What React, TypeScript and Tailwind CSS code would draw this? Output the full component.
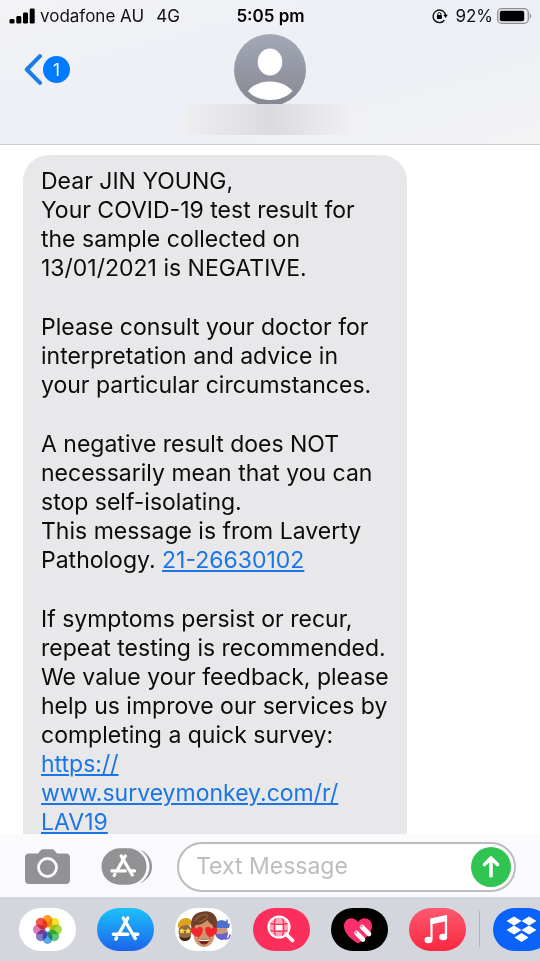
import type { ReactNode } from "react";

const paragraphs = [
	[
		"Dear JIN YOUNG,",
		"Your COVID-19 test result for",
		"the sample collected on",
		"13/01/2021 is NEGATIVE.",
	],
	[
		"Please consult your doctor for",
		"interpretation and advice in",
		"your particular circumstances.",
	],
];

function Lines({ lines }: { lines: string[] }) {
	return (
		<>
			{lines.map((line) => (
				<span key={line} className="block whitespace-nowrap">
					{line}
				</span>
			))}
		</>
	);
}

function StatusBar() {
	return (
		<div className="grid grid-cols-[1fr_auto_1fr] items-center h-[31px] pl-[9px] pr-2 text-[17px] leading-5 text-[#111]">
			<div className="flex items-center whitespace-nowrap">
				<svg width="26" height="16" viewBox="0 0 26 16" aria-hidden="true">
					<rect x="0.5" y="11" width="5" height="4.6" rx="1.4" />
					<rect x="7.3" y="8" width="5" height="7.6" rx="1.4" />
					<rect x="14" y="4.5" width="5" height="11.1" rx="1.4" />
					<rect x="20.7" y="0.5" width="5" height="15.1" rx="1.4" />
				</svg>
				<span className="ml-[5px]">vodafone AU</span>
				<span className="ml-3">4G</span>
			</div>
			<time className="font-semibold text-black">5:05 pm</time>
			<div className="flex items-center justify-end">
				<svg width="16" height="16" viewBox="0 0 16 16" aria-hidden="true">
					<path
						d="M12.400 12.200A6.300 6.300 0 1 1 13.600 7"
						fill="none"
						stroke="#111"
						strokeWidth="1.400"
					/>
					<path d="M11.400 6.800h4.400l-2.200 3.200z" />
					<rect x="4.900" y="7" width="5" height="4" rx="0.700" />
					<path d="M5.900 7.200V6a1.500 1.500 0 0 1 3 0v1.200" fill="none" stroke="#111" strokeWidth="1" />
				</svg>
				<span className="ml-[7px]">92%</span>
				<svg className="ml-1" width="35" height="16" viewBox="0 0 35 16" aria-hidden="true">
					<rect x="0.7" y="0.7" width="30.6" height="14.6" rx="4" fill="none" stroke="#8e8e90" strokeWidth="1.3" />
					<rect x="2.8" y="2.8" width="24.4" height="10.4" rx="2" />
					<path d="M32.8 5.4v5.2c1.9-.8 1.9-4.4 0-5.2z" fill="#8e8e90" />
				</svg>
			</div>
		</div>
	);
}

function Header() {
	return (
		<header className="shrink-0 border-b border-[#cfcfd3] bg-linear-to-br from-[#f3f3f5] via-[#eceff6] to-[#f3f3f4]">
			<StatusBar />
			<div className="grid grid-cols-[1fr_auto_1fr] pt-[3px] pb-[9px]">
				<button type="button" aria-label="Back, 1 unread" className="flex items-center self-start justify-self-start pl-6 pt-5 gap-px">
					<svg width="18" height="31" viewBox="0 0 18 31" aria-hidden="true">
						<path d="M16 2.2 2.8 15.5 16 28.8" fill="none" stroke="#1a7bea" strokeWidth="4" strokeLinecap="round" strokeLinejoin="round" />
					</svg>
					<span className="flex items-center justify-center size-[27px] rounded-full bg-[#007aff] text-white text-[17px] leading-5">
						1
					</span>
				</button>
				<div className="flex flex-col items-center">
					<div className="h-[70px] overflow-hidden">
						<svg width="72" height="72" viewBox="0 0 72 72" role="img" aria-label="Contact">
							<defs>
								<linearGradient id="avatar" x1="0" y1="0" x2="0" y2="1">
									<stop offset="0" stopColor="#a4a8b6" />
									<stop offset="1" stopColor="#858892" />
								</linearGradient>
							</defs>
							<circle cx="36" cy="36" r="36" fill="url(#avatar)" />
							<ellipse cx="36" cy="28" rx="12.300" ry="13.500" fill="#fff" />
							<path d="M14 57C19 51 26 47.500 36 47.500S53 51 58.500 57C53 63 45 66 36 66S19 63 14 57z" fill="#fff" />
						</svg>
					</div>
					<div className="w-[170px] h-[31px] bg-linear-to-r from-[#efeff2] via-[#dadbdf] to-[#f1f1f3]" />
				</div>
			</div>
		</header>
	);
}

function Message() {
	return (
		<main className="flex-1 min-h-0 overflow-hidden pt-[10px] pl-[23px] pr-4">
			<article className="flex flex-col gap-[30px] w-96 max-w-full rounded-[26px] bg-[#e8e8ea] pt-3 pb-10 pl-[18px] text-[23px] leading-[29px] text-[#0c0c0d]">
				{paragraphs.map((lines) => (
					<p key={lines[0]}>
						<Lines lines={lines} />
					</p>
				))}
				<p>
					<Lines
						lines={[
							"A negative result does NOT",
							"necessarily mean that you can",
							"stop self-isolating.",
							"This message is from Laverty",
						]}
					/>
					Pathology.{" "}
					<a href="tel:2126630102" className="text-[#1a76e6] underline decoration-2 underline-offset-2">
						21-26630102
					</a>
				</p>
				<p>
					<Lines
						lines={[
							"If symptoms persist or recur,",
							"repeat testing is recommended.",
							"We value your feedback, please",
							"help us improve our services by",
							"completing a quick survey:",
						]}
					/>
					<a href="https://www.surveymonkey.com/r/LAV19" className="text-[#1a76e6] underline decoration-2 underline-offset-2">
						https://
						<br />
						www.surveymonkey.com/r/
						<br />
						LAV19
					</a>
				</p>
			</article>
		</main>
	);
}

function AppStoreMark() {
	return (
		<g fill="none" stroke="#fff" strokeLinecap="round" strokeWidth="3.400">
			<path d="M16.500 2 7.500 18" />
			<path d="M12 2 24 22.500" />
			<path d="M2 18.200h14.500M22 18.200h4.500" />
			<path d="M5.300 21.800l-.8 1.300" />
		</g>
	);
}

function Composer() {
	return (
		<form className="flex items-center h-[63px] pt-[2px] pl-[25px] pr-6 bg-[#fafafc]" onSubmit={(e) => e.preventDefault()}>
			<button type="button" aria-label="Camera" className="shrink-0">
				<svg width="45" height="35" viewBox="0 0 45 35" aria-hidden="true">
					<path
						d="M4 4.500h9l2.500-3c.8-1 1.500-1.300 2.700-1.300h8.600c1.200 0 1.900.3 2.700 1.300l2.500 3h9c2.500 0 4 1.500 4 4V31c0 2.500-1.500 4-4 4H4c-2.500 0-4-1.500-4-4V8.500c0-2.500 1.500-4 4-4z"
						fill="#929294"
					/>
					<circle cx="22.500" cy="18.500" r="9" fill="none" stroke="#fafafc" strokeWidth="2.800" />
				</svg>
			</button>
			<button type="button" aria-label="Apps" className="shrink-0 ml-[31px]">
				<svg width="51" height="37" viewBox="0 0 51 37" aria-hidden="true">
					<rect x="6" y="1" width="45" height="35" rx="17.500" fill="#929294" />
					<rect x="0" y="-1" width="48.500" height="39" rx="19.500" fill="#fafafc" />
					<rect x="0.500" y="0.300" width="45" height="36.400" rx="18.200" fill="#929294" />
					<g transform="translate(9 6)">
						<g transform="scale(.93)">
							<AppStoreMark />
						</g>
					</g>
				</svg>
			</button>
			<div className="flex flex-1 min-w-0 items-center h-[50px] ml-[25px] pl-[17px] pr-[3px] rounded-full border-2 border-[#bdbbc0] bg-white">
				<input
					type="text"
					aria-label="Text Message"
					placeholder="Text Message"
					className="flex-1 min-w-0 bg-transparent text-[23px] leading-[29px] placeholder:text-[#bdbdc0] outline-none"
				/>
				<button type="submit" aria-label="Send" className="shrink-0 flex items-center justify-center size-10 rounded-full bg-[#30c553]">
					<svg width="20" height="24" viewBox="0 0 20 24" aria-hidden="true">
						<path d="M10 21V4M3.500 9.500 10 3l6.500 6.500" fill="none" stroke="#fff" strokeWidth="3.600" strokeLinecap="round" strokeLinejoin="round" />
					</svg>
				</button>
			</div>
		</form>
	);
}

function AppPill({ label, children }: { label: string; children: ReactNode }) {
	return (
		<button type="button" aria-label={label} className="shrink-0 w-[57px] h-[43px] rounded-full overflow-hidden">
			<svg width="57" height="43" viewBox="0 0 57 43" aria-hidden="true">
				{children}
			</svg>
		</button>
	);
}

const petals = ["#fb9a1e", "#f2e22c", "#a8d845", "#5cc77c", "#5ba8e6", "#8a79c9", "#dc7cb4", "#f4564a"];

function AppDrawer() {
	return (
		<nav aria-label="Message apps" className="flex items-center gap-[21px] h-16 pl-[19px] bg-[#d3d6dc] overflow-hidden">
			<AppPill label="Photos">
				<rect width="57" height="43" fill="#fff" />
				<g transform="translate(28.500 21.500)">
					{petals.map((color, i) => (
						<rect
							key={color}
							className="mix-blend-multiply"
							x="-4.800"
							y="-14.500"
							width="9.600"
							height="12.500"
							rx="4.800"
							fill={color}
							transform={`rotate(${i * 45})`}
						/>
					))}
				</g>
			</AppPill>
			<AppPill label="App Store">
				<defs>
					<linearGradient id="store" x1="0" y1="0" x2="0" y2="1">
						<stop offset="0" stopColor="#1bc1fb" />
						<stop offset="1" stopColor="#1d63ec" />
					</linearGradient>
				</defs>
				<rect width="57" height="43" fill="url(#store)" />
				<g transform="translate(14.300 8)">
					<AppStoreMark />
				</g>
			</AppPill>
			<AppPill label="Memoji">
				<rect width="57" height="43" fill="#fff" />
				{/* left friend, star eyes and beanie */}
				<ellipse cx="10" cy="24" rx="6.500" ry="8.500" fill="#9a6a3e" />
				<path d="M3 20c-1-6 3-10 8-10 4 0 6 2 7 8-5-2-10-1-15 2z" fill="#d9a420" />
				<path d="M4 28c3 2.500 8 2.500 12 0-.5 3-3 5-6 5s-5.500-2-6-5z" fill="#3b2719" />
				<path d="m7 20 1 1.800 2 .3-1.500 1.500.4 2L7 24.700l-1.900.9.400-2L4 22.100l2-.3zM13 20l1 1.800 2 .3-1.500 1.500.4 2-1.900-.9-1.900.9.400-2-1.500-1.500 2-.3z" fill="#f7dc52" />
				{/* right friend, blue cap */}
				<ellipse cx="46" cy="23" rx="6.500" ry="8.500" fill="#c79a7c" />
				<path d="M39 18c0-7 13-8 15-1v3H39z" fill="#4b6fcb" />
				<path d="M40 25c4 2 9 1 13-1 0 5-2 8-6 8-4-.500-6-3-7-7z" fill="#6a62c8" />
				<path d="M50 31c3 0 5-1 5-4M52 12v2M54 16v2" stroke="#5f63dc" strokeWidth="1.500" fill="none" strokeLinecap="round" />
				{/* front face */}
				<path d="M18.500 17c0-5 4-9 10.500-9s10.500 4 10.500 9v9c0 7-4.500 13-10.500 13s-10.500-6-10.500-13z" fill="#d2926b" />
				<path d="M17.500 25C14 14 17 5 26 4c8-3 17 2 16 11 0 4-1 7-2.500 10-1-3-1.500-6-2-8-2-1-4-3-5-5-3 3-7 5-12 5-1 2-2 5-3 8z" fill="#6f4029" />
				<path d="M20 13c3-5 8-7 13-6M24 14c4-1 7-3 9-6" stroke="#94603d" strokeWidth="1.200" fill="none" />
				<path d="M23.500 30.500c4 1.500 7 1.500 11 0-.5 4-2.500 6-5.500 6s-5-2-5.500-6z" fill="#7a211c" />
				<path d="M24 31c4 1.200 6 1.200 10 0l-.5 2h-9z" fill="#fff" />
				<path d="M23.800 29.500c-4.500-1.500-7.500-4-8-6.700-.5-3.800 3.700-4.800 6-1.800 1.300-3.500 6-3 6 .8 0 2.700-1.500 5.200-4 7.700z" fill="#f3262b" />
				<path d="M34.200 29.500c4.500-1.500 7.500-4 8-6.700.5-3.800-3.700-4.800-6-1.800-1.300-3.500-6-3-6 .8 0 2.700 1.500 5.200 4 7.700z" fill="#f3262b" />
			</AppPill>
			<AppPill label="Images">
				<rect width="57" height="43" fill="#fc2f5c" />
				<circle cx="26" cy="19" r="10" fill="#ffa6b9" />
				<path d="M23 16h6v6h-6z" fill="#fff" />
				<path d="M17 15.500c5 1 13 1 18 0M16 22.500c5 1 15 1 20 0M22.500 9c-1.500 6-1.500 14 0 20M29.500 9c1.500 6 1.500 14 0 20" fill="none" stroke="#fc2f5c" strokeWidth="1.300" />
				<circle cx="26" cy="19" r="10.500" fill="none" stroke="#fff" strokeWidth="2.200" />
				<path d="m34 27 5.500 5.500" stroke="#fff" strokeWidth="3.800" strokeLinecap="round" />
			</AppPill>
			<AppPill label="Digital Touch">
				<rect width="57" height="43" fill="#000" />
				<path d="M27 35.500C18 30 13 24 13 18c0-8.500 10-10.500 14-4 4-6.500 14-4.500 14 4 0 6-5 12-14 17.500z" fill="#fb2f6b" />
				<g stroke="#fff" strokeWidth="4.600">
					<path d="m25.500 25 6.500 6.500M31 19l7 7" strokeLinecap="round" />
				</g>
				<path d="m24.800 24.300.2.200M30.300 18.300l.2.200" stroke="#fb7fa3" strokeWidth="2.200" strokeLinecap="round" />
			</AppPill>
			<AppPill label="Music">
				<defs>
					<linearGradient id="music" x1="0" y1="0" x2="0" y2="1">
						<stop offset="0" stopColor="#fb5a70" />
						<stop offset="1" stopColor="#fa2740" />
					</linearGradient>
				</defs>
				<rect width="57" height="43" fill="url(#music)" />
				<path d="M22.500 31V11.500L37 8.500v19" fill="none" stroke="#fff" strokeWidth="2.200" />
				<path d="M21.500 10.500 38 7v6l-16.500 3.500z" fill="#fff" />
				<ellipse cx="19.500" cy="32" rx="4" ry="3.300" fill="#fff" />
				<ellipse cx="34.200" cy="29" rx="4" ry="3.300" fill="#fff" />
			</AppPill>
			<div className="shrink-0 w-px h-9 -mx-2 bg-[#b3b6bd]" />
			<AppPill label="Dropbox">
				<rect width="57" height="43" fill="#0b62fb" />
				<path d="m21 8.500 7.500 4.500-7.500 4.500-7.500-4.500zM36 8.500l7.500 4.500-7.500 4.500-7.500-4.500zM21 17.500l7.500 4.500-7.500 4.500-7.500-4.500zM36 17.500l7.500 4.500-7.500 4.500-7.500-4.500zM28.500 25l7 4.500-7 4.500-7-4.500z" fill="#fff" />
			</AppPill>
		</nav>
	);
}

export default function App() {
	return (
		<div className="flex flex-col h-screen overflow-hidden bg-white font-[Inter,'Liberation_Sans',sans-serif]">
			<Header />
			<Message />
			<footer className="shrink-0">
				<Composer />
				<AppDrawer />
			</footer>
		</div>
	);
}
